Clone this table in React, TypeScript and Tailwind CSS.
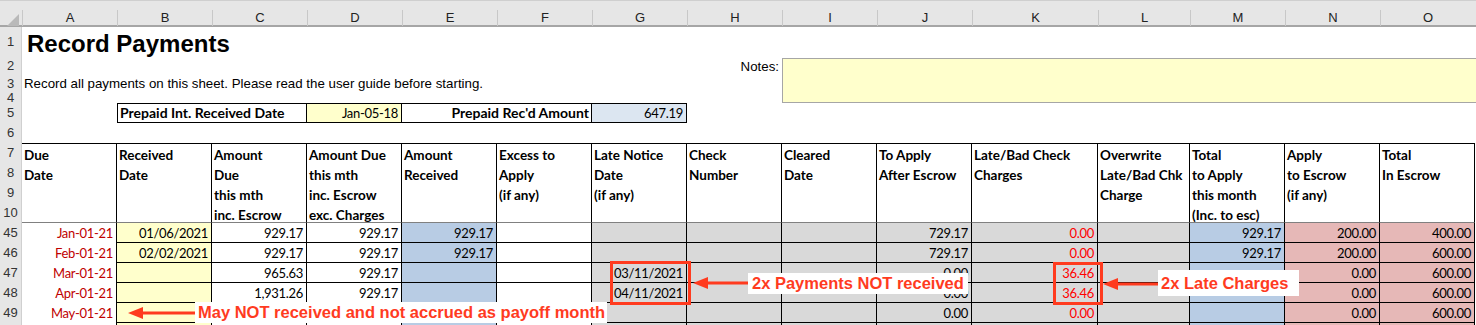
import React from 'react';

const GRID = 'grid grid-cols-[repeat(10,95px)_126px_92px_repeat(3,95px)]';
const LETTERS = ['A', 'B', 'C', 'D', 'E', 'F', 'G', 'H', 'I', 'J', 'K', 'L', 'M', 'N', 'O'];

const HEADERS = [
  ['Due', 'Date'],
  ['Received', 'Date'],
  ['Amount', 'Due', 'this mth', 'inc. Escrow'],
  ['Amount Due', 'this mth', 'inc. Escrow', 'exc. Charges'],
  ['Amount', 'Received'],
  ['Excess to', 'Apply', '(if any)'],
  ['Late Notice', 'Date', '(if any)'],
  ['Check', 'Number'],
  ['Cleared', 'Date'],
  ['To Apply', 'After Escrow'],
  ['Late/Bad Check', 'Charges'],
  ['Overwrite', 'Late/Bad Chk', 'Charge'],
  ['Total', 'to Apply', 'this month', '(Inc. to esc)'],
  ['Apply', 'to Escrow', '(if any)'],
  ['Total', 'In Escrow'],
];

// fill per column A..O for the payment rows
const FILLS = [
  'bg-white',
  'bg-[#ffffcc]',
  'bg-white',
  'bg-white',
  'bg-[#b8cce4]',
  'bg-white',
  'bg-[#d9d9d9]',
  'bg-[#d9d9d9]',
  'bg-[#d9d9d9]',
  'bg-[#d9d9d9]',
  'bg-[#d9d9d9]',
  'bg-[#d9d9d9]',
  'bg-[#b8cce4]',
  'bg-[#e6b8b7]',
  'bg-[#e6b8b7]',
];

const ROWS: { n: number; cells: string[] }[] = [
  { n: 45, cells: ['Jan-01-21', '01/06/2021', '929.17', '929.17', '929.17', '', '', '', '', '729.17', '0.00', '', '929.17', '200.00', '400.00'] },
  { n: 46, cells: ['Feb-01-21', '02/02/2021', '929.17', '929.17', '929.17', '', '', '', '', '729.17', '0.00', '', '929.17', '200.00', '600.00'] },
  { n: 47, cells: ['Mar-01-21', '', '965.63', '929.17', '', '', '03/11/2021', '', '', '0.00', '36.46', '', '', '0.00', '600.00'] },
  { n: 48, cells: ['Apr-01-21', '', '1,931.26', '929.17', '', '', '04/11/2021', '', '', '0.00', '36.46', '', '', '0.00', '600.00'] },
  { n: 49, cells: ['May-01-21', '', '', '', '', '', '', '', '', '0.00', '0.00', '', '', '0.00', '600.00'] },
  { n: 50, cells: ['Jun-01-21', '', '', '', '', '', '', '', '', '0.00', '0.00', '', '', '0.00', '600.00'] },
];

function RowHead({ n, h }: { n: number; h: string }) {
  return (
    <div className={`${h} w-[22px] shrink-0 bg-[#e6e6e6] border-r border-[#d0d0d0] flex items-center justify-center overflow-hidden text-[13px] text-[#333] font-['Liberation_Sans',sans-serif]`}>
      {n}
    </div>
  );
}

function Arrow({ x1, x2, y }: { x1: number; x2: number; y: number }) {
  // head points left, tip at x1
  const w = x2 - x1;
  return (
    <svg className="absolute" style={{ left: x1, top: y - 7 }} width={w} height={14}>
      <line x1={12} y1={7} x2={w} y2={7} stroke="#ff3b1f" strokeWidth={3} />
      <polygon points={`0,7 15,1 15,13`} fill="#ff3b1f" />
    </svg>
  );
}

export default function App() {
  return (
    <div className="relative w-[1476px] h-[325px] overflow-hidden bg-white font-[Lato,sans-serif] text-black">
      {/* column letters */}
      <div className="flex h-[27px] bg-[#e6e6e6] border-t border-t-[#cfcfcf] border-b-2 border-b-[#a6a6a6]">
        <div className="w-[22px] shrink-0 relative">
          <svg className="absolute left-[7px] top-[13px]" width="12" height="12">
            <polygon points="12,0 12,12 0,12" fill="#b9b9b9" />
          </svg>
        </div>
        <div className={`${GRID} pt-[9px]`}>
          {LETTERS.map((l) => (
            <div key={l} className="border-l border-[#c8c8c8] text-center text-[13px] leading-[16px] text-[#222] font-['Liberation_Sans',sans-serif]">
              {l}
            </div>
          ))}
        </div>
      </div>

      {/* rows 1-6 */}
      <div className="flex">
        <div className="flex flex-col">
          <RowHead n={1} h="h-[30px]" />
          <RowHead n={2} h="h-[18px]" />
          <RowHead n={3} h="h-[17px]" />
          <RowHead n={4} h="h-[11px]" />
          <RowHead n={5} h="h-[20px]" />
          <RowHead n={6} h="h-[20px]" />
        </div>
        <div className={`${GRID} grid-rows-[30px_18px_17px_11px_20px_20px] font-['Liberation_Sans',sans-serif]`}>
          <div className="col-start-1 col-span-15 row-start-1 pl-[5px] pt-[5px] text-[24px] leading-[24px] font-bold whitespace-nowrap">
            Record Payments
          </div>
          <div className="col-start-8 row-start-2 text-right pr-[3px] text-[13.3px] leading-[20px]">Notes:</div>
          <div className="col-start-9 col-span-7 row-start-2 row-span-3 mt-[1px] border-y border-l border-[#a6a6a6] bg-[#ffffcc] -mr-[1px]" />
          <div className="col-start-1 col-span-7 row-start-3 pl-[2px] text-[13.3px] leading-[17px] whitespace-nowrap">
            Record all payments on this sheet. Please read the user guide before starting.
          </div>
          <div className="col-start-2 col-span-2 row-start-5 border border-black px-[2px] font-[Lato,sans-serif] font-bold text-[14px] leading-[18px]">
            Prepaid Int. Received Date
          </div>
          <div className="col-start-4 row-start-5 border-y border-r border-black bg-[#ffffcc] text-right pr-[3px] font-[Lato,sans-serif] text-[13px] tracking-[-0.3px] leading-[18px]">
            Jan-05-18
          </div>
          <div className="col-start-5 col-span-2 row-start-5 border-y border-r border-black text-right pr-[2px] font-[Lato,sans-serif] font-bold text-[14px] leading-[18px]">
            Prepaid Rec'd Amount
          </div>
          <div className="col-start-7 row-start-5 border-y border-r border-black bg-[#dce6f1] text-right pr-[3px] font-[Lato,sans-serif] text-[13px] tracking-[-0.3px] leading-[18px]">
            647.19
          </div>
        </div>
      </div>

      {/* rows 7-10: table header */}
      <div className="flex">
        <div className="flex flex-col">
          {[7, 8, 9, 10].map((n) => (
            <RowHead key={n} n={n} h="h-[20px]" />
          ))}
        </div>
        <div className={`${GRID} h-[80px]`}>
          {HEADERS.map((lines, i) => (
            <div key={i} className="border-t border-r border-t-black border-r-black border-b border-b-[#808080] px-[2px] font-bold text-[13.5px] leading-[20px] whitespace-nowrap overflow-hidden">
              {lines.map((t) => (
                <div key={t} className="h-[20px] pt-[1px]">{t}</div>
              ))}
            </div>
          ))}
        </div>
      </div>

      {/* payment rows */}
      {ROWS.map((r) => (
        <div key={r.n} className="flex">
          <RowHead n={r.n} h="h-[20px]" />
          <div className={`${GRID} h-[20px]`}>
            {r.cells.map((c, i) => (
              <div
                key={i}
                className={`${FILLS[i]} border-r border-black ${i > 0 ? 'border-b' : ''} text-right pr-[3px] pt-[1px] text-[13px] tracking-[-0.3px] leading-[18px] whitespace-nowrap ${
                  i === 0 ? 'text-[#c00000]' : i === 10 ? 'text-[#ff0000]' : ''
                }`}
              >
                {c}
              </div>
            ))}
          </div>
        </div>
      ))}

      {/* annotations */}
      <div className="absolute left-[610px] top-[261px] w-[81px] h-[44px] border-[3px] border-[#ff3b1f]" />
      <div className="absolute left-[1053px] top-[262px] w-[50px] h-[43px] border-[3px] border-[#ff3b1f]" />

      <Arrow x1={128} x2={195} y={313} />
      <Arrow x1={693} x2={749} y={283} />
      <Arrow x1={1103} x2={1158} y={284} />

      <div className="absolute left-[195px] top-[302px] w-[412px] h-[21px] bg-white pl-[3px] text-[16.5px] leading-[21px] font-bold text-[#ff3b1f] whitespace-nowrap font-['Liberation_Sans',sans-serif]">
        May NOT received and not accrued as payoff month
      </div>
      <div className="absolute left-[748px] top-[273px] w-[220px] h-[21px] bg-white pl-[4px] text-[16.5px] leading-[21px] font-bold text-[#ff3b1f] whitespace-nowrap font-['Liberation_Sans',sans-serif]">
        2x Payments NOT received
      </div>
      <div className="absolute left-[1158px] top-[270px] w-[141px] h-[26px] bg-white pl-[3px] text-[16.5px] leading-[26px] font-bold text-[#ff3b1f] whitespace-nowrap font-['Liberation_Sans',sans-serif]">
        2x Late Charges
      </div>
    </div>
  );
}
